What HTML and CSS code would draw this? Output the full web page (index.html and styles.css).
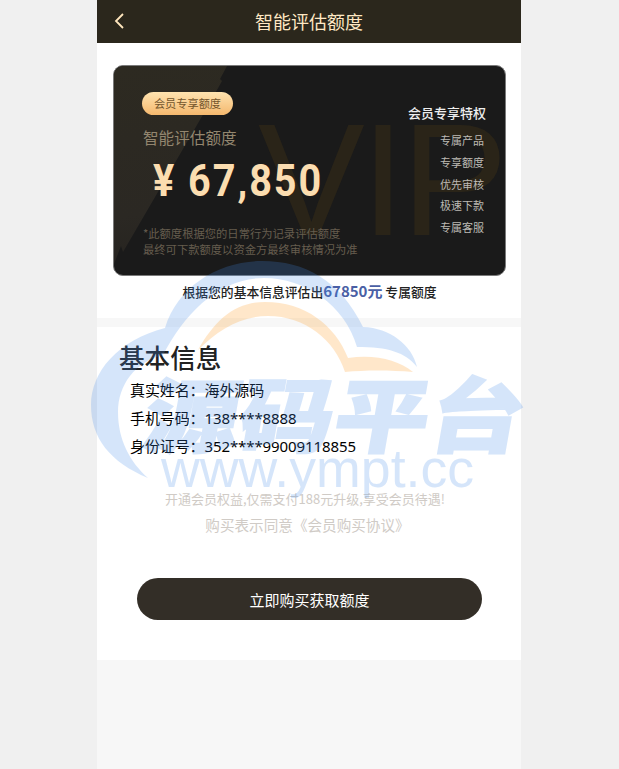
FILE: index.html
```html
<!DOCTYPE html>
<html lang="zh">
<head>
<meta charset="utf-8">
<title>智能评估额度</title>
<link rel="stylesheet" href="styles.css">
</head>
<body>
<div class="app">
  <header class="topbar">
    <svg class="back" viewBox="0 0 12 18" width="12" height="18"><path d="M10 2 L3 9 L10 16" fill="none" stroke="#ffe6bd" stroke-width="1.8"/></svg>
    <h1 class="topbar-title">智能评估额度</h1>
  </header>
  <section class="panel panel-top">
    <div class="card">
      <div class="card-wedge"></div>
      <div class="card-vip">VIP</div>
      <div class="card-left">
        <span class="pill">会员专享额度</span>
        <div class="card-label">智能评估额度</div>
        <div class="card-amount">¥ 67,850</div>
        <p class="card-note">*此额度根据您的日常行为记录评估额度<br>最终可下款额度以资金方最终审核情况为准</p>
      </div>
      <div class="card-right">
        <div class="perk-title">会员专享特权</div>
        <ul class="perk-list">
          <li>专属产品</li>
          <li>专享额度</li>
          <li>优先审核</li>
          <li>极速下款</li>
          <li>专属客服</li>
        </ul>
      </div>
    </div>
    <p class="caption">根据您的基本信息评估出<strong class="caption-num">67850元</strong> 专属额度</p>
  </section>
  <section class="panel panel-bottom">
    <h2 class="info-title">基本信息</h2>
    <ul class="info-list">
      <li>真实姓名：海外源码</li>
      <li>手机号码：138****8888</li>
      <li>身份证号：352****99009118855</li>
    </ul>
    <p class="tip">开通会员权益,仅需支付188元升级,享受会员待遇!</p>
    <p class="agree">购买表示同意《会员购买协议》</p>
    <button class="buy" type="button">立即购买获取额度</button>
  </section>
</div>
<svg class="watermark" viewBox="0 0 619 769" width="619" height="769">
  <path class="wm-blue" d="M148 478 C110 462 91 438 91 405 C91 372 118 340 165 328 C178 285 220 261 262 261 C305 261 340 280 363 327 C390 328 412 345 417 367 C405 352 388 347 357 347 C345 305 305 278 264 278 C220 278 185 312 163 355 C135 362 118 385 118 412 C118 440 130 462 148 478 Z"/>
  <path class="wm-orange" d="M198 350 C215 320 235 302 265 302 C305 302 335 325 348 358 C375 354 398 360 413 372 C390 370 365 370 345 372 C335 340 305 316 268 316 C240 316 218 330 198 350 Z"/>
  <text class="wm-cn" transform="translate(140 446) skewX(-10) scale(1 .85)">源码平台</text>
  <text class="wm-en" x="161" y="487">www.ympt.cc</text>
</svg>
</body>
</html>
```
FILE: styles.css
```css
* { box-sizing: border-box; }
html, body { margin: 0; padding: 0; }
body {
  position: relative;
  width: 619px;
  height: 769px;
  overflow: hidden;
  background: #f0f0f0;
  font-family: "Noto Sans CJK SC", "Noto Sans", sans-serif;
  color: #000;
}
.app {
  width: 424px;
  height: 769px;
  margin-left: 97px;
  background: #f7f7f7;
}
.topbar {
  position: relative;
  height: 43px;
  background: #2b271c;
  display: flex;
  align-items: center;
  justify-content: center;
}
.back { position: absolute; left: 16px; top: 12px; }
.topbar-title {
  margin: 0;
  font-size: 18px;
  font-weight: 400;
  line-height: 43px;
  color: #ffe8c4;
}
.panel { background: #fff; }
.panel-top {
  height: 275px;
  padding: 22px 15px 0 16px;
}
.panel-bottom {
  height: 333px;
  margin-top: 9px;
  padding: 13px 0 0 23px;
}
.card {
  position: relative;
  height: 211px;
  border-radius: 10px;
  overflow: hidden;
  background: #1a1a1a;
  border: 1px solid #7a7a7a;
  display: flex;
  justify-content: space-between;
}
.card-wedge {
  position: absolute;
  inset: 0;
  background: linear-gradient(170deg, #2d2a21 0%, #2b2823 55%, #1f1e1c 100%);
  clip-path: polygon(0 0, 113px 0, 106px 13px, 108px 15px, 94px 40px, 9px 186px, 7px 180px, 0 198px);
}
.card-vip {
  position: absolute;
  left: 144px;
  top: 34px;
  font-family: "Liberation Sans", sans-serif;
  font-size: 160px;
  line-height: 160px;
  letter-spacing: -4px;
  color: #2a2418;
}
.card-left {
  position: relative;
  padding: 26px 0 0 28px;
}
.pill {
  display: block;
  width: 91px;
  height: 23px;
  border-radius: 12px;
  background: linear-gradient(180deg, #ffe3b0, #f4b86e);
  color: #73552c;
  font-size: 11.2px;
  line-height: 23px;
  text-align: center;
}
.card-label {
  margin: 10px 0 0 1px;
  font-size: 15.6px;
  line-height: 24px;
  color: #93866f;
}
.card-amount {
  margin: 4px 0 0 11px;
  font-family: Roboto, "Liberation Sans", sans-serif;
  font-weight: 700;
  font-size: 44px;
  line-height: 56px;
  letter-spacing: 2.2px;
  white-space: nowrap;
  color: #fbddb0;
  transform: scaleX(0.9);
  transform-origin: left center;
}
.card-note {
  margin: 16px 0 0 1px;
  font-size: 11.3px;
  line-height: 16px;
  white-space: nowrap;
  color: #665d4e;
}
.card-right {
  position: relative;
  padding: 37px 19px 0 0;
  text-align: right;
}
.perk-title {
  font-size: 13px;
  font-weight: 500;
  line-height: 20px;
  color: #eeeeee;
}
.perk-list {
  list-style: none;
  margin: 7px 2px 0 0;
  padding: 0;
  font-size: 11px;
  line-height: 21.8px;
  color: #bdbab4;
}
.caption {
  margin: 4px 0 0;
  font-size: 12.8px;
  font-weight: 500;
  line-height: 22px;
  text-align: center;
  color: #222;
}
.caption-num {
  font-size: 15px;
  font-weight: 700;
  color: #4a5fa5;
}
.info-title {
  margin: 0 0 0 -1px;
  font-size: 25.6px;
  font-weight: 500;
  line-height: 34px;
  color: #222;
}
.info-list {
  list-style: none;
  margin: 2px 0 0 10px;
  padding: 0;
  font-family: "Noto Sans", "Noto Sans CJK SC", sans-serif;
  font-size: 15px;
  line-height: 28px;
  letter-spacing: -0.1px;
  color: #000;
}
.tip {
  margin: 29px 0 0 -31px;
  font-size: 13px;
  line-height: 20px;
  text-align: center;
  color: #d0cbc6;
}
.agree {
  margin: 4px 0 0 -26px;
  font-size: 14.6px;
  line-height: 24px;
  text-align: center;
  color: #d0cbc6;
}
.buy {
  display: block;
  width: 345px;
  height: 42px;
  margin: 41px 0 0 17px;
  border: 0;
  border-radius: 21px;
  background: #332e27;
  color: #fff;
  font-family: inherit;
  font-size: 15px;
  font-weight: 400;
}
.watermark {
  position: absolute;
  left: 0;
  top: 0;
  opacity: 0.22;
  pointer-events: none;
}
.wm-blue { fill: rgb(68, 141, 236); }
.wm-orange { fill: rgb(255, 150, 20); }
.wm-cn {
  font-family: "Noto Sans CJK SC", sans-serif;
  font-weight: 900;
  font-size: 95px;
  fill: rgb(68, 141, 236);
  stroke: rgb(68, 141, 236);
  stroke-width: 2px;
}
.wm-en {
  font-family: "Liberation Sans", sans-serif;
  font-size: 53.7px;
  fill: rgb(68, 141, 236);
}
```
